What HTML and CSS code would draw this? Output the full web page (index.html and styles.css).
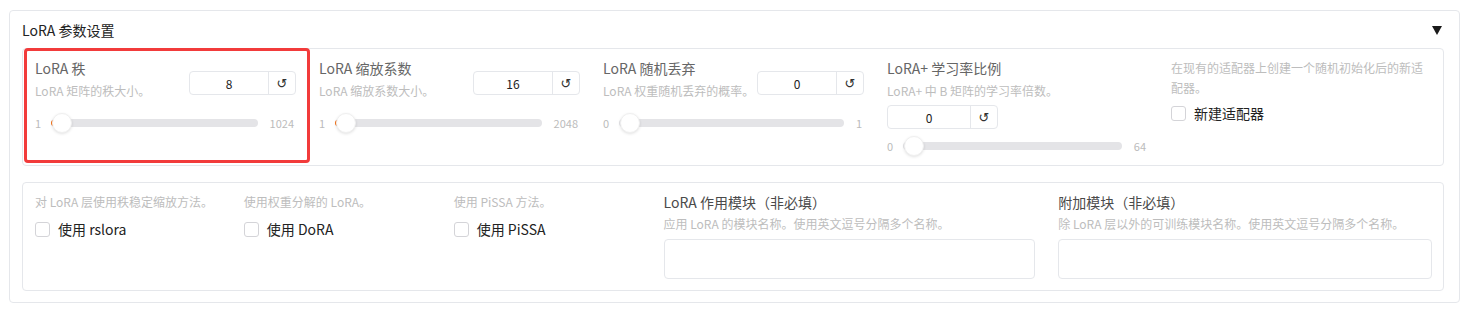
FILE: index.html
```html
<!DOCTYPE html>
<html lang="zh-CN">
<head>
  <meta charset="UTF-8" />
  <title>LoRA 参数设置</title>
  <link rel="stylesheet" href="styles.css">
</head>
<body>

  <div class="panel">
    <div class="panel-head">
      <span class="panel-title">LoRA 参数设置</span>
      <span class="caret"></span>
    </div>

    <div class="form form-top">
      <div class="highlight"></div>

      <div class="field">
        <div class="field-top">
          <div class="field-text">
            <div class="label">LoRA 秩</div>
            <div class="info info-gap">LoRA 矩阵的秩大小。</div>
          </div>
          <div class="num">
            <input class="num-input" value="8" />
            <button class="num-reset">↺</button>
          </div>
        </div>
        <div class="slider">
          <span class="slider-min">1</span>
          <div class="track"><span class="fill"></span><span class="thumb"></span></div>
          <span class="slider-max">1024</span>
        </div>
      </div>

      <div class="field">
        <div class="field-top">
          <div class="field-text">
            <div class="label">LoRA 缩放系数</div>
            <div class="info info-gap">LoRA 缩放系数大小。</div>
          </div>
          <div class="num">
            <input class="num-input" value="16" />
            <button class="num-reset">↺</button>
          </div>
        </div>
        <div class="slider">
          <span class="slider-min">1</span>
          <div class="track"><span class="fill"></span><span class="thumb"></span></div>
          <span class="slider-max">2048</span>
        </div>
      </div>

      <div class="field">
        <div class="field-top">
          <div class="field-text">
            <div class="label">LoRA 随机丢弃</div>
            <div class="info info-gap">LoRA 权重随机丢弃的概率。</div>
          </div>
          <div class="num">
            <input class="num-input" value="0" />
            <button class="num-reset">↺</button>
          </div>
        </div>
        <div class="slider">
          <span class="slider-min">0</span>
          <div class="track"><span class="thumb"></span></div>
          <span class="slider-max">1</span>
        </div>
      </div>

      <div class="field">
        <div class="label">LoRA+ 学习率比例</div>
        <div class="info info-gap">LoRA+ 中 B 矩阵的学习率倍数。</div>
        <div class="num num-wide">
          <input class="num-input" value="0" />
          <button class="num-reset">↺</button>
        </div>
        <div class="slider slider-low">
          <span class="slider-min">0</span>
          <div class="track"><span class="thumb"></span></div>
          <span class="slider-max">64</span>
        </div>
      </div>

      <div class="field">
        <div class="info">在现有的适配器上创建一个随机初始化后的新适配器。</div>
        <label class="check check-top">
          <span class="box"></span>
          <span>新建适配器</span>
        </label>
      </div>
    </div>

    <div class="form form-bottom">
      <div class="field">
        <div class="info">对 LoRA 层使用秩稳定缩放方法。</div>
        <label class="check">
          <span class="box"></span>
          <span>使用 rslora</span>
        </label>
      </div>

      <div class="field">
        <div class="info">使用权重分解的 LoRA。</div>
        <label class="check">
          <span class="box"></span>
          <span>使用 DoRA</span>
        </label>
      </div>

      <div class="field">
        <div class="info">使用 PiSSA 方法。</div>
        <label class="check">
          <span class="box"></span>
          <span>使用 PiSSA</span>
        </label>
      </div>

      <div class="field">
        <div class="label label-dark">LoRA 作用模块（非必填）</div>
        <div class="info info-gap">应用 LoRA 的模块名称。使用英文逗号分隔多个名称。</div>
        <textarea class="text"></textarea>
      </div>

      <div class="field">
        <div class="label label-dark">附加模块（非必填）</div>
        <div class="info info-gap">除 LoRA 层以外的可训练模块名称。使用英文逗号分隔多个名称。</div>
        <textarea class="text"></textarea>
      </div>
    </div>
  </div>

</body>
</html>
```

FILE: styles.css
```css
body {
  margin: 0;
  font-family: 'Noto Sans CJK SC', 'Noto Sans', sans-serif;
  background: #fff;
  color: #222;
}

.panel {
  margin: 10px 9px 0 9px;
  width: 1422px;
  border: 1px solid #e5e7eb;
  border-radius: 4px;
  padding: 0 15px 11px 12px;
}

.panel-head {
  display: flex;
  justify-content: space-between;
  align-items: center;
  height: 20px;
  padding-top: 9px;
  margin-bottom: 8px;
}

.panel-title {
  font-size: 14px;
  line-height: 20px;
  color: #222;
}

.caret {
  width: 0;
  height: 0;
  border-left: 5px solid transparent;
  border-right: 5px solid transparent;
  border-top: 9px solid #1a1a1a;
  margin-right: 2px;
}

.form {
  position: relative;
  display: grid;
  border: 1px solid #e5e7eb;
  border-radius: 4px;
}

.form-top {
  grid-template-columns: repeat(5, 1fr);
}

.form-bottom {
  margin-top: 16px;
  grid-template-columns: 209fr 210fr 210fr 395fr 397fr;
}

.highlight {
  position: absolute;
  left: 1px;
  top: -1px;
  width: 280px;
  height: 109px;
  border: 3px solid #f23b3b;
  border-radius: 4px;
  pointer-events: none;
}

.field {
  padding: 9px 11px 9px 12px;
  min-width: 0;
}

.form-bottom .field {
  padding: 9px 11px 11px 12px;
}

.field-top {
  display: flex;
  justify-content: space-between;
}

.label {
  font-size: 14px;
  line-height: 20px;
  color: #666;
}

.label-dark {
  color: #4a4a4a;
}

.info {
  font-size: 12px;
  line-height: 20px;
  color: #bdbdbd;
}

.info-gap {
  margin-top: 3px;
}

.form-bottom .info-gap {
  margin-top: 2px;
}

.num {
  display: flex;
  width: 107px;
  height: 24px;
  margin-top: 13px;
  border: 1px solid #e5e7eb;
  border-radius: 4px;
  box-sizing: border-box;
  background: #fff;
}

.num-wide {
  width: 111px;
  margin-top: 4px;
}

.num-input {
  flex: 1;
  min-width: 0;
  border: none;
  background: transparent;
  text-align: center;
  font-family: 'Noto Sans CJK SC', 'Noto Sans', sans-serif;
  font-size: 12px;
  color: #222;
  padding: 0;
  outline: none;
}

.num-reset {
  width: 27px;
  border: none;
  border-left: 1px solid #e5e7eb;
  background: transparent;
  font-family: 'DejaVu Sans', sans-serif;
  font-size: 13px;
  color: #333;
  padding: 0;
}

.slider {
  display: flex;
  align-items: center;
  gap: 10px;
  height: 20px;
  margin-top: 12px;
  font-size: 11px;
  color: #bbb;
}

.slider-low {
  margin-top: 7px;
}

.slider-max {
  margin-left: 2px;
  margin-right: 2px;
}

.track {
  position: relative;
  flex: 1;
  height: 8px;
  border-radius: 4px;
  background: #e4e4e7;
}

.fill {
  position: absolute;
  left: 0;
  top: 1px;
  width: 6px;
  height: 6px;
  border-radius: 3px 0 0 3px;
  background: #f97316;
}

.thumb {
  position: absolute;
  left: 1px;
  top: -6px;
  width: 20px;
  height: 20px;
  border-radius: 50%;
  background: #fff;
  border: 1px solid #f0f0f0;
  box-sizing: border-box;
  box-shadow: 0 1px 3px rgba(0, 0, 0, 0.12);
}

.check {
  display: flex;
  align-items: center;
  gap: 8px;
  height: 22px;
  margin-top: 6px;
  font-size: 14px;
  color: #222;
}

.check-top {
  margin-top: 4px;
}

.box {
  width: 15px;
  height: 15px;
  border: 1px solid #d4d4d8;
  border-radius: 3px;
  box-sizing: border-box;
  background: #fff;
}

.text {
  display: block;
  width: 100%;
  height: 40px;
  margin-top: 5px;
  border: 1px solid #e5e7eb;
  border-radius: 4px;
  box-sizing: border-box;
  resize: none;
  background: #fff;
}
```
